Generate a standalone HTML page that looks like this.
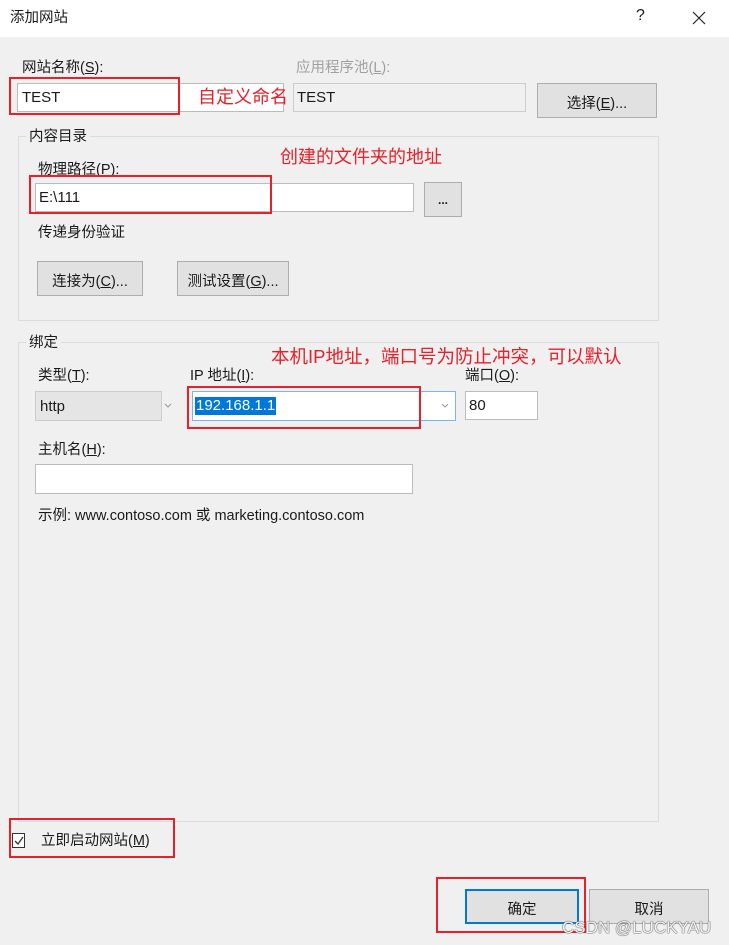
<!DOCTYPE html><html><head><meta charset="utf-8"><style>
body{margin:0;width:729px;height:945px;background:#f0f0f0;position:relative;overflow:hidden;font-family:"Liberation Sans","Noto Sans CJK SC",sans-serif;font-size:14.5px;color:#1a1a1a}
div{position:absolute;box-sizing:border-box}
.t{white-space:nowrap;line-height:18px}
.box{background:#fff;border:1px solid #bcbcbc}
.btn{background:#e1e1e1;border:1px solid #adadad;text-align:center}
.red{border:2px solid #e8202a}
.rt{color:#e8202a;font-size:18px;white-space:nowrap;line-height:22px}
.grp{border:1px solid #dcdcdc}
u{text-decoration:underline}
</style></head><body>
<div style="left:0;top:0;width:729px;height:37px;background:#fff"></div>
<div class="t" style="left:10px;top:9px">添加网站</div>
<div class="t" style="left:636px;top:7px;font-size:16px">?</div>
<svg style="position:absolute;left:692px;top:11px" width="14" height="14"><path d="M1 1L13 13M13 1L1 13" stroke="#222" stroke-width="1.2"/></svg>

<div class="t" style="left:22px;top:59px">网站名称(<u>S</u>):</div>
<div class="box" style="left:17px;top:83px;width:267px;height:29px"></div>
<div class="t" style="left:22px;top:89px;font-size:15px">TEST</div>
<div class="red" style="left:9px;top:77px;width:171px;height:38px"></div>
<div class="rt" style="left:198px;top:86px">自定义命名</div>
<div class="t" style="left:296px;top:59px;color:#a0a0a0">应用程序池(<u>L</u>):</div>
<div class="box" style="left:293px;top:83px;width:233px;height:29px;background:#f0f0f0;border-color:#ccc"></div>
<div class="t" style="left:297px;top:89px;font-size:15px">TEST</div>
<div class="btn" style="left:537px;top:83px;width:120px;height:35px;padding-top:8px">选择(<u>E</u>)...</div>

<div class="grp" style="left:18px;top:136px;width:641px;height:185px"></div>
<div class="t" style="left:26px;top:128px;background:#f0f0f0;padding:0 3px">内容目录</div>
<div class="t" style="left:38px;top:161px">物理路径(P):</div>
<div class="rt" style="left:280px;top:146px">创建的文件夹的地址</div>
<div class="box" style="left:35px;top:183px;width:379px;height:29px"></div>
<div class="t" style="left:39px;top:189px;font-size:15px">E:\111</div>
<div class="red" style="left:29px;top:175px;width:243px;height:39px"></div>
<div class="btn" style="left:424px;top:182px;width:38px;height:35px;padding-top:10px;font-size:12px;font-weight:bold">...</div>
<div class="t" style="left:38px;top:224px">传递身份验证</div>
<div class="btn" style="left:37px;top:261px;width:106px;height:35px;padding-top:8px">连接为(<u>C</u>)...</div>
<div class="btn" style="left:177px;top:261px;width:112px;height:35px;padding-top:8px">测试设置(<u>G</u>)...</div>

<div class="grp" style="left:18px;top:342px;width:641px;height:480px"></div>
<div class="t" style="left:26px;top:334px;background:#f0f0f0;padding:0 3px">绑定</div>
<div class="rt" style="left:271px;top:346px;background:#f0f0f0;font-size:18.5px">本机IP地址，端口号为防止冲突，可以默认</div>
<div class="t" style="left:38px;top:367px">类型(<u>T</u>):</div>
<div style="left:35px;top:391px;width:127px;height:30px;background:#e5e5e5;border:1px solid #ccc"></div>
<div class="t" style="left:40px;top:398px;font-size:15px">http</div>
<svg style="position:absolute;left:164px;top:403px" width="8" height="6"><path d="M1 1L4 4L7 1" stroke="#999" fill="none"/></svg>
<div class="t" style="left:190px;top:367px">IP 地址(<u>I</u>):</div>
<div class="box" style="left:192px;top:391px;width:264px;height:30px;border-color:#7eb4ea"></div>
<div class="t" style="left:195px;top:397px;background:#0078d7;color:#fff;padding:0 1px;font-size:15px">192.168.1.1</div>
<svg style="position:absolute;left:441px;top:403px" width="8" height="6"><path d="M1 1L4 4L7 1" stroke="#999" fill="none"/></svg>
<div class="red" style="left:187px;top:386px;width:234px;height:43px"></div>
<div class="t" style="left:465px;top:367px">端口(<u>O</u>):</div>
<div class="box" style="left:465px;top:391px;width:73px;height:29px"></div>
<div class="t" style="left:469px;top:397px;font-size:15px">80</div>
<div class="t" style="left:38px;top:441px">主机名(<u>H</u>):</div>
<div class="box" style="left:35px;top:464px;width:378px;height:30px"></div>
<div class="t" style="left:38px;top:507px">示例: www.contoso.com 或 marketing.contoso.com</div>

<div style="left:12px;top:833px;width:13px;height:15px;border:1px solid #333;background:#fff"></div>
<svg style="position:absolute;left:13px;top:835px" width="12" height="12"><path d="M2 6L5 9L10 2" stroke="#333" fill="none" stroke-width="1.3"/></svg>
<div class="t" style="left:41px;top:832px">立即启动网站(<u>M</u>)</div>
<div class="red" style="left:9px;top:818px;width:166px;height:40px"></div>

<div class="btn" style="left:465px;top:889px;width:114px;height:35px;border:2px solid #0078d7;padding-top:7px">确定</div>
<div class="red" style="left:436px;top:877px;width:150px;height:56px"></div>
<div class="btn" style="left:589px;top:889px;width:120px;height:35px;padding-top:8px">取消</div>
<div class="t" style="left:562px;top:919px;font-size:17px;color:#f4f4f4;text-shadow:0 0 1px #555,0 0 1px #555,0 0 1px #555">CSDN @LUCKYAU</div>
</body></html>
